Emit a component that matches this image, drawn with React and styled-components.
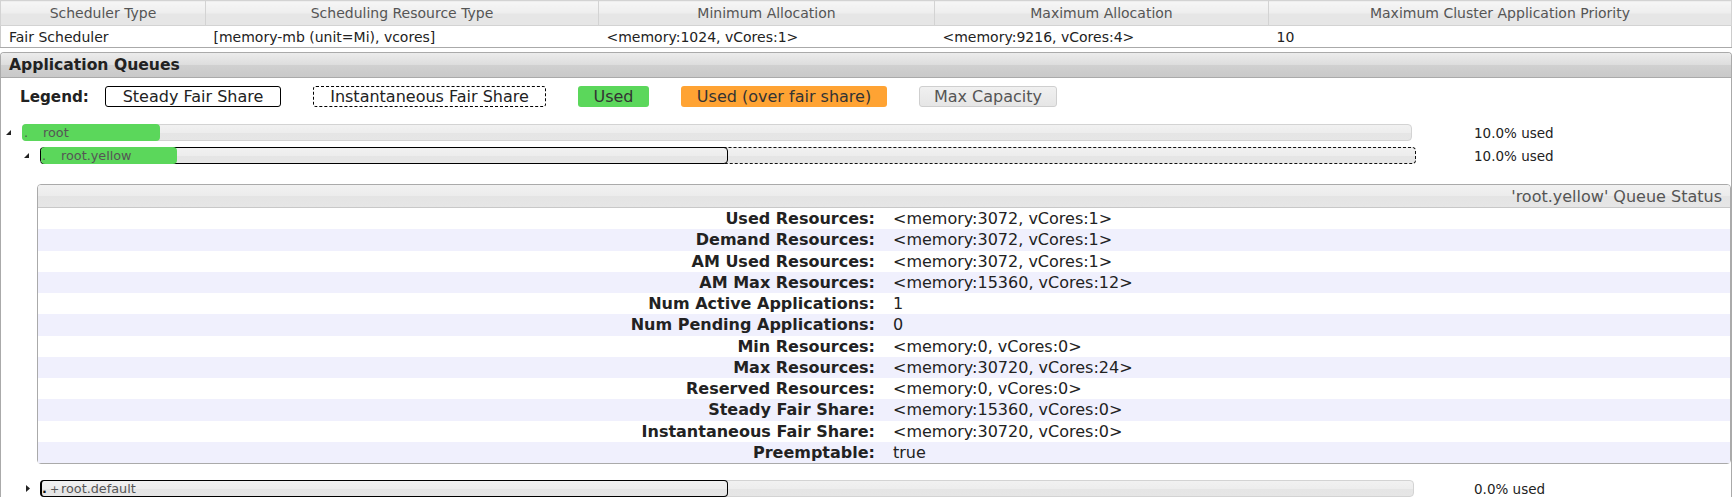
import React from 'react';
import styled, { createGlobalStyle } from 'styled-components';

const GlobalStyle = createGlobalStyle`
  html, body {
    margin: 0;
    padding: 0;
    background: #fff;
  }
  body {
    font-family: "DejaVu Sans", Verdana, sans-serif;
    color: #222;
  }
`;

const Page = styled.div`
  width: 1732px;
  padding-right: 1px;
`;

/* scheduler summary table */

const InfoTable = styled.table`
  width: 100%;
  border-collapse: collapse;
  table-layout: fixed;
  font-size: 14px;
`;

const HeadCell = styled.th`
  box-sizing: border-box;
  width: ${p => (p.$w ? `${p.$w}px` : 'auto')};
  height: 25px;
  padding: 0 8px;
  font-weight: normal;
  color: #555;
  text-align: center;
  background: linear-gradient(#f6f6f6 0%, #eeeeee 48%, #e6e6e6 52%, #e6e6e6 100%);
  border: 1px solid #d3d3d3;
`;

const Cell = styled.td`
  height: 21px;
  padding: 0 8px;
  color: #222;
  border-bottom: 1px solid #aaa;
  border-left: ${p => (p.$first ? '1px solid #ccc' : 'none')};
  border-right: ${p => (p.$last ? '1px solid #ccc' : 'none')};
  white-space: nowrap;
`;

/* application queues section */

const Section = styled.section`
  margin-top: 4px;
  border: 1px solid #aaa;
  border-bottom: none;
  border-radius: 4px 4px 0 0;
`;

const SectionHeader = styled.h3`
  margin: 0;
  height: 24px;
  padding: 0 8px;
  display: flex;
  align-items: center;
  font-size: 15.6px;
  font-weight: bold;
  color: #222;
  background: linear-gradient(#ececec 0%, #dddddd 50%, #d0d0d0 52%, #c9c9c9 100%);
  border-bottom: 1px solid #aaa;
  border-radius: 3px 3px 0 0;
`;

const SectionBody = styled.div`
  padding: 8px 0 0 0;
`;

const Legend = styled.div`
  display: flex;
  align-items: center;
  padding-left: 19px;
  font-size: 16px;
  height: 21px;
`;

const LegendTitle = styled.span`
  width: 85px;
  font-size: 15.2px;
  font-weight: bold;
  color: #222;
`;

const LegendItem = styled.span`
  box-sizing: border-box;
  width: ${p => p.$w}px;
  height: 21px;
  margin-right: 32px;
  display: flex;
  align-items: center;
  justify-content: center;
  border: 1px ${p => p.$line || 'solid'} ${p => p.$border || 'transparent'};
  border-radius: 3px;
  background: ${p => p.$bg || '#fff'};
  color: ${p => p.$color || '#222'};
`;

const Tree = styled.div`
  margin-top: ${p => p.$top}px;
  display: flex;
  flex-direction: column;
  gap: 6px;
`;

const QueueLine = styled.div`
  display: grid;
  grid-template-columns: 1fr 257px;
  align-items: center;
  height: 17px;
`;

const QueueHead = styled.div`
  display: flex;
  align-items: center;
  padding-left: ${p => p.$indent}px;
`;

const Toggle = styled.span`
  width: 16px;
  height: 17px;
  display: flex;
  align-items: center;
`;

const Bar = styled.span`
  position: relative;
  box-sizing: border-box;
  display: flex;
  align-items: center;
  width: ${p => p.$w}px;
  height: 17px;
  border: 1px ${p => (p.$dashed ? 'dashed #111' : 'solid #d3d3d3')};
  border-radius: 4px;
  background: linear-gradient(#f1f1f1 0%, #ededed 50%, #e5e5e5 52%, #e6e6e6 100%);
  font-size: 12.8px;
  color: #555;
`;

const UsedFill = styled.span`
  position: absolute;
  left: ${p => (p.$inset ? 0 : -1)}px;
  top: -1px;
  bottom: -1px;
  width: ${p => p.$w}px;
  background: #5bd75b;
  border-radius: 4px;
`;

const SteadyMark = styled.span`
  position: absolute;
  left: -1px;
  top: -1px;
  bottom: -1px;
  width: ${p => p.$w}px;
  box-sizing: border-box;
  border: 1px solid #000;
  border-left-width: ${p => (p.$focused ? 2 : 1)}px;
  border-radius: 4px;
`;

const Lead = styled.span`
  position: relative;
  box-sizing: border-box;
  width: 20px;
  padding-left: 1px;
  display: flex;
  align-items: baseline;
  color: ${p => (p.$dark ? '#111' : '#555')};
  font-weight: ${p => (p.$dark ? 'bold' : 'normal')};
`;

const Plus = styled.span`
  margin-left: 3px;
  font-weight: normal;
  color: #555;
  font-size: 11px;
`;

const QueueName = styled.span`
  position: relative;
`;

const Stats = styled.span`
  font-size: 13.5px;
  color: #222;
`;

/* queue status table */

const StatusTable = styled.table`
  width: calc(100% - 36px);
  margin: 20px 0 16px 36px;
  border: 1px solid #aaa;
  border-radius: 4px;
  border-collapse: separate;
  border-spacing: 0;
  font-size: 16px;
`;

const StatusHead = styled.th`
  height: 22px;
  padding: 0 8px 0 0;
  text-align: right;
  font-weight: normal;
  color: #555;
  background: linear-gradient(#f1f1f1 0%, #ececec 48%, #e4e4e4 52%, #e6e6e6 100%);
  border-bottom: 1px solid #c8c8c8;
  border-radius: 3px 3px 0 0;
`;

const StatusRow = styled.tr`
  background: ${p => (p.$odd ? '#f0f0fd' : '#fff')};
`;

const StatusLabel = styled.th`
  width: 50%;
  height: 21.25px;
  padding: 0 9px 0 0;
  text-align: right;
  font-weight: bold;
  color: #222;
  white-space: nowrap;
`;

const StatusValue = styled.td`
  padding: 0 0 0 9px;
  color: #222;
  white-space: nowrap;
`;

function OpenArrow() {
  return (
    <svg width="6" height="6" viewBox="0 0 6 6" style={{ marginTop: 1 }}>
      <polygon points="5,0 5,5 0,5" fill="#222" />
    </svg>
  );
}

function ClosedArrow() {
  return (
    <svg width="7" height="8" viewBox="0 0 7 8" style={{ marginLeft: 2 }}>
      <polygon points="0,0 4,3.5 0,7" fill="#222" />
    </svg>
  );
}

const schedulerCols = [
  ['Scheduler Type', 'Fair Scheduler', 205],
  ['Scheduling Resource Type', '[memory-mb (unit=Mi), vcores]', 393],
  ['Minimum Allocation', '<memory:1024, vCores:1>', 336],
  ['Maximum Allocation', '<memory:9216, vCores:4>', 334],
  ['Maximum Cluster Application Priority', '10', 0],
];

const legendItems = [
  { text: 'Steady Fair Share', w: 176, border: '#000' },
  { text: 'Instantaneous Fair Share', w: 233, border: '#000', line: 'dashed' },
  { text: 'Used', w: 71, bg: '#5bd75b', color: '#333' },
  { text: 'Used (over fair share)', w: 206, bg: '#ffa333', color: '#333' },
  {
    text: 'Max Capacity',
    w: 138,
    border: '#cfcfcf',
    bg: 'linear-gradient(#f0f0f0, #e6e6e6)',
    color: '#555',
  },
];

const yellowStatus = [
  ['Used Resources:', '<memory:3072, vCores:1>'],
  ['Demand Resources:', '<memory:3072, vCores:1>'],
  ['AM Used Resources:', '<memory:3072, vCores:1>'],
  ['AM Max Resources:', '<memory:15360, vCores:12>'],
  ['Num Active Applications:', '1'],
  ['Num Pending Applications:', '0'],
  ['Min Resources:', '<memory:0, vCores:0>'],
  ['Max Resources:', '<memory:30720, vCores:24>'],
  ['Reserved Resources:', '<memory:0, vCores:0>'],
  ['Steady Fair Share:', '<memory:15360, vCores:0>'],
  ['Instantaneous Fair Share:', '<memory:30720, vCores:0>'],
  ['Preemptable:', 'true'],
];

function QueueRow({ indent, open, width, dashed, used, steady, name, plus, stats }) {
  return (
    <QueueLine>
      <QueueHead $indent={indent}>
        <Toggle>{open ? <OpenArrow /> : <ClosedArrow />}</Toggle>
        <Bar $w={width} $dashed={dashed}>
          {steady ? <SteadyMark $w={steady} $focused={plus} /> : null}
          {used ? <UsedFill $w={used} $inset={dashed} /> : null}
          <Lead $dark={plus}>
            .{plus ? <Plus>+</Plus> : null}
          </Lead>
          <QueueName>{name}</QueueName>
        </Bar>
      </QueueHead>
      <Stats>{stats}</Stats>
    </QueueLine>
  );
}

function App() {
  return (
    <Page>
      <GlobalStyle />
      <InfoTable>
        <thead>
          <tr>
            {schedulerCols.map(([head, , w]) => (
              <HeadCell key={head} $w={w}>{head}</HeadCell>
            ))}
          </tr>
        </thead>
        <tbody>
          <tr>
            {schedulerCols.map(([head, value], i) => (
              <Cell key={head} $first={i === 0} $last={i === schedulerCols.length - 1}>
                {value}
              </Cell>
            ))}
          </tr>
        </tbody>
      </InfoTable>

      <Section>
        <SectionHeader>Application Queues</SectionHeader>
        <SectionBody>
          <Legend>
            <LegendTitle>Legend:</LegendTitle>
            {legendItems.map(item => (
              <LegendItem
                key={item.text}
                $w={item.w}
                $border={item.border}
                $line={item.line}
                $bg={item.bg}
                $color={item.color}
              >
                {item.text}
              </LegendItem>
            ))}
          </Legend>

          <Tree $top={17}>
            <QueueRow indent={5} open width={1390} used={138} name="root" stats="10.0% used" />
            <QueueRow
              indent={23}
              open
              width={1376}
              dashed
              steady={688}
              used={136}
              name="root.yellow"
              stats="10.0% used"
            />
          </Tree>

          <StatusTable>
            <thead>
              <tr>
                <StatusHead colSpan={2}>'root.yellow' Queue Status</StatusHead>
              </tr>
            </thead>
            <tbody>
              {yellowStatus.map(([label, value], i) => (
                <StatusRow key={label} $odd={i % 2 === 1}>
                  <StatusLabel>{label}</StatusLabel>
                  <StatusValue>{value}</StatusValue>
                </StatusRow>
              ))}
            </tbody>
          </StatusTable>

          <Tree $top={0}>
            <QueueRow indent={23} width={1374} steady={688} plus name="root.default" stats="0.0% used" />
          </Tree>
        </SectionBody>
      </Section>
    </Page>
  );
}

export default App;
